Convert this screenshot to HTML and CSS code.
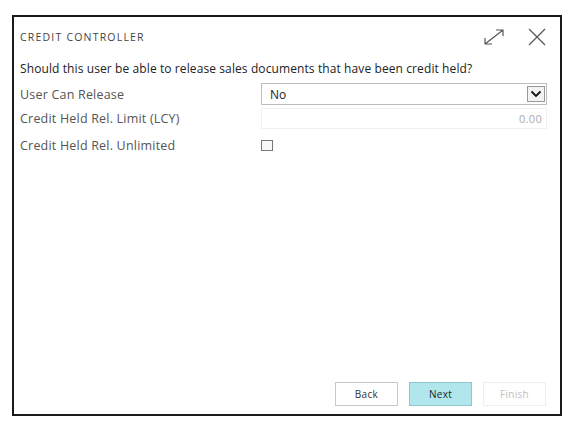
FILE: index.html
```html
<!DOCTYPE html>
<html>
<head>
<meta charset="utf-8">
<link rel="stylesheet" href="styles.css">
</head>
<body>
<div class="dialog">
  <div class="header">
    <div class="title">CREDIT CONTROLLER</div>
    <div class="actions">
      <svg class="icon" width="22" height="18" viewBox="0 0 22 18">
        <path d="M2 16 L20 2 M13 2 H20 V8 M2 10 V16 H9" fill="none" stroke="#555" stroke-width="1.2"/>
      </svg>
      <svg class="icon" width="18" height="18" viewBox="0 0 18 18">
        <path d="M1 1 L17 17 M17 1 L1 17" fill="none" stroke="#555" stroke-width="1.2"/>
      </svg>
    </div>
  </div>
  <div class="question">Should this user be able to release sales documents that have been credit held?</div>
  <div class="form">
    <div class="label">User Can Release</div>
    <div class="select">
      <span>No</span>
      <span class="drop">
        <svg width="12" height="8" viewBox="0 0 12 8"><path d="M1.5 1.5 L6 6 L10.5 1.5" fill="none" stroke="#111" stroke-width="1.8"/></svg>
      </span>
    </div>
    <div class="label">Credit Held Rel. Limit (LCY)</div>
    <div class="input">0.00</div>
    <div class="label row3">Credit Held Rel. Unlimited</div>
    <div class="checkcell row3"><span class="checkbox"></span></div>
  </div>
  <div class="spacer"></div>
  <div class="footer">
    <button class="btn">Back</button>
    <button class="btn primary">Next</button>
    <button class="btn disabled">Finish</button>
  </div>
</div>
</body>
</html>
```
FILE: styles.css
```css
html, body {
  margin: 0;
  padding: 0;
  background: #fff;
}
body {
  padding: 15px 0 0 12px;
  font-family: "Open Sans", "Noto Sans", sans-serif;
}
.dialog {
  width: 550px;
  height: 401px;
  box-sizing: border-box;
  border: 2px solid #1a1a1a;
  display: flex;
  flex-direction: column;
  padding: 0 13px 0 6px;
}
.header {
  display: flex;
  justify-content: space-between;
  align-items: center;
  height: 39px;
}
.title {
  font-size: 10.5px;
  color: #444;
  letter-spacing: 1.2px;
}
.actions {
  display: flex;
  align-items: center;
  gap: 23px;
  padding-right: 1px;
}
.icon { display: block; }
.question {
  font-size: 12px;
  letter-spacing: 0.1px;
  color: #222;
  height: 26px;
  line-height: 26px;
  white-space: nowrap;
}
.form {
  display: grid;
  grid-template-columns: 241px 286px;
  grid-template-rows: 24px 24px 27px;
  align-items: center;
}
.label {
  font-size: 12.5px;
  letter-spacing: 0.2px;
  color: #555;
}
.row3 { padding-top: 3px; }
.select {
  height: 22px;
  box-sizing: border-box;
  border: 1.5px solid #bdbdbd;
  display: flex;
  align-items: center;
  justify-content: space-between;
  padding: 0 1px 0 8px;
  font-size: 12px;
  color: #222;
}
.drop {
  width: 18px;
  height: 16px;
  box-sizing: border-box;
  border: 1px solid #999;
  background: #f2f2f2;
  display: flex;
  align-items: center;
  justify-content: center;
}
.input {
  height: 21px;
  box-sizing: border-box;
  border: 1px solid #f0f0f0;
  text-align: right;
  padding-right: 4px;
  font-size: 11px;
  letter-spacing: 0.3px;
  color: #aaa;
  line-height: 19px;
}
.checkcell { display: flex; align-items: center; }
.checkbox {
  width: 10px;
  height: 9px;
  border: 1px solid #777;
  background: #f7f7f7;
}
.spacer { flex: 1; }
.footer {
  display: flex;
  justify-content: flex-end;
  gap: 11px;
  padding-bottom: 8px;
  padding-right: 1px;
}
.btn {
  width: 63px;
  height: 24px;
  font-family: "Open Sans", sans-serif;
  font-size: 10px;
  letter-spacing: 0.3px;
  border: 1px solid #c8c8c8;
  background: #fff;
  color: #333;
  padding: 0;
}
.btn.primary {
  background: #b0e6ec;
  border-color: #8cc8ce;
  color: #222;
}
.btn.disabled {
  border-color: #eee;
  color: #c0c0c0;
}
```
